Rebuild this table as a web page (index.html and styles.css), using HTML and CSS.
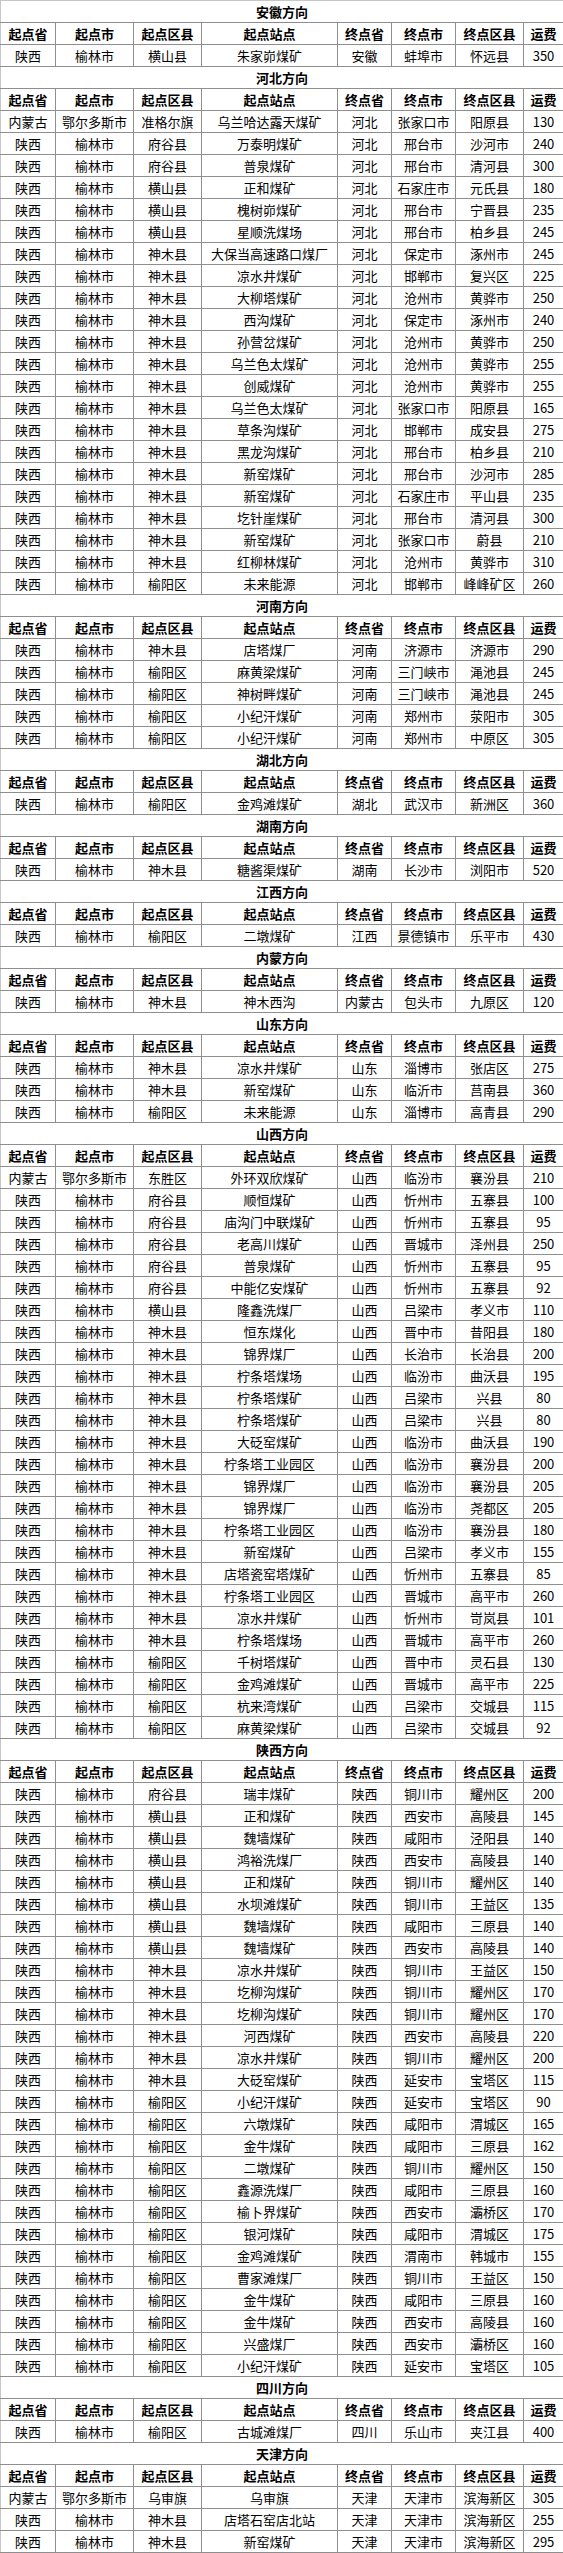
FILE: index.html
```html
<!DOCTYPE html>
<html lang="zh-CN">
<head>
<meta charset="utf-8">
<title>运费表</title>
<link rel="stylesheet" href="styles.css">
</head>
<body>
<table class="freight">
<colgroup>
<col class="c-sp"><col class="c-sc"><col class="c-sd"><col class="c-ss"><col class="c-ep"><col class="c-ec"><col class="c-ed"><col class="c-fee">
</colgroup>
<tbody id="rows">
<tr><td class="title" colspan="8">安徽方向</td></tr>
<tr class="head"><th>起点省</th><th>起点市</th><th>起点区县</th><th>起点站点</th><th>终点省</th><th>终点市</th><th>终点区县</th><th>运费</th></tr>
<tr><td>陕西</td><td>榆林市</td><td>横山县</td><td>朱家峁煤矿</td><td>安徽</td><td>蚌埠市</td><td>怀远县</td><td>350</td></tr>

<tr><td class="title" colspan="8">河北方向</td></tr>
<tr class="head"><th>起点省</th><th>起点市</th><th>起点区县</th><th>起点站点</th><th>终点省</th><th>终点市</th><th>终点区县</th><th>运费</th></tr>
<tr><td>内蒙古</td><td>鄂尔多斯市</td><td>准格尔旗</td><td>乌兰哈达露天煤矿</td><td>河北</td><td>张家口市</td><td>阳原县</td><td>130</td></tr>
<tr><td>陕西</td><td>榆林市</td><td>府谷县</td><td>万泰明煤矿</td><td>河北</td><td>邢台市</td><td>沙河市</td><td>240</td></tr>
<tr><td>陕西</td><td>榆林市</td><td>府谷县</td><td>普泉煤矿</td><td>河北</td><td>邢台市</td><td>清河县</td><td>300</td></tr>
<tr><td>陕西</td><td>榆林市</td><td>横山县</td><td>正和煤矿</td><td>河北</td><td>石家庄市</td><td>元氏县</td><td>180</td></tr>
<tr><td>陕西</td><td>榆林市</td><td>横山县</td><td>槐树峁煤矿</td><td>河北</td><td>邢台市</td><td>宁晋县</td><td>235</td></tr>
<tr><td>陕西</td><td>榆林市</td><td>横山县</td><td>星顺洗煤场</td><td>河北</td><td>邢台市</td><td>柏乡县</td><td>245</td></tr>
<tr><td>陕西</td><td>榆林市</td><td>神木县</td><td>大保当高速路口煤厂</td><td>河北</td><td>保定市</td><td>涿州市</td><td>245</td></tr>
<tr><td>陕西</td><td>榆林市</td><td>神木县</td><td>凉水井煤矿</td><td>河北</td><td>邯郸市</td><td>复兴区</td><td>225</td></tr>
<tr><td>陕西</td><td>榆林市</td><td>神木县</td><td>大柳塔煤矿</td><td>河北</td><td>沧州市</td><td>黄骅市</td><td>250</td></tr>
<tr><td>陕西</td><td>榆林市</td><td>神木县</td><td>西沟煤矿</td><td>河北</td><td>保定市</td><td>涿州市</td><td>240</td></tr>
<tr><td>陕西</td><td>榆林市</td><td>神木县</td><td>孙营岔煤矿</td><td>河北</td><td>沧州市</td><td>黄骅市</td><td>250</td></tr>
<tr><td>陕西</td><td>榆林市</td><td>神木县</td><td>乌兰色太煤矿</td><td>河北</td><td>沧州市</td><td>黄骅市</td><td>255</td></tr>
<tr><td>陕西</td><td>榆林市</td><td>神木县</td><td>创威煤矿</td><td>河北</td><td>沧州市</td><td>黄骅市</td><td>255</td></tr>
<tr><td>陕西</td><td>榆林市</td><td>神木县</td><td>乌兰色太煤矿</td><td>河北</td><td>张家口市</td><td>阳原县</td><td>165</td></tr>
<tr><td>陕西</td><td>榆林市</td><td>神木县</td><td>草条沟煤矿</td><td>河北</td><td>邯郸市</td><td>成安县</td><td>275</td></tr>
<tr><td>陕西</td><td>榆林市</td><td>神木县</td><td>黑龙沟煤矿</td><td>河北</td><td>邢台市</td><td>柏乡县</td><td>210</td></tr>
<tr><td>陕西</td><td>榆林市</td><td>神木县</td><td>新窑煤矿</td><td>河北</td><td>邢台市</td><td>沙河市</td><td>285</td></tr>
<tr><td>陕西</td><td>榆林市</td><td>神木县</td><td>新窑煤矿</td><td>河北</td><td>石家庄市</td><td>平山县</td><td>235</td></tr>
<tr><td>陕西</td><td>榆林市</td><td>神木县</td><td>圪针崖煤矿</td><td>河北</td><td>邢台市</td><td>清河县</td><td>300</td></tr>
<tr><td>陕西</td><td>榆林市</td><td>神木县</td><td>新窑煤矿</td><td>河北</td><td>张家口市</td><td>蔚县</td><td>210</td></tr>
<tr><td>陕西</td><td>榆林市</td><td>神木县</td><td>红柳林煤矿</td><td>河北</td><td>沧州市</td><td>黄骅市</td><td>310</td></tr>
<tr><td>陕西</td><td>榆林市</td><td>榆阳区</td><td>未来能源</td><td>河北</td><td>邯郸市</td><td>峰峰矿区</td><td>260</td></tr>

<tr><td class="title" colspan="8">河南方向</td></tr>
<tr class="head"><th>起点省</th><th>起点市</th><th>起点区县</th><th>起点站点</th><th>终点省</th><th>终点市</th><th>终点区县</th><th>运费</th></tr>
<tr><td>陕西</td><td>榆林市</td><td>神木县</td><td>店塔煤厂</td><td>河南</td><td>济源市</td><td>济源市</td><td>290</td></tr>
<tr><td>陕西</td><td>榆林市</td><td>榆阳区</td><td>麻黄梁煤矿</td><td>河南</td><td>三门峡市</td><td>渑池县</td><td>245</td></tr>
<tr><td>陕西</td><td>榆林市</td><td>榆阳区</td><td>神树畔煤矿</td><td>河南</td><td>三门峡市</td><td>渑池县</td><td>245</td></tr>
<tr><td>陕西</td><td>榆林市</td><td>榆阳区</td><td>小纪汗煤矿</td><td>河南</td><td>郑州市</td><td>荥阳市</td><td>305</td></tr>
<tr><td>陕西</td><td>榆林市</td><td>榆阳区</td><td>小纪汗煤矿</td><td>河南</td><td>郑州市</td><td>中原区</td><td>305</td></tr>

<tr><td class="title" colspan="8">湖北方向</td></tr>
<tr class="head"><th>起点省</th><th>起点市</th><th>起点区县</th><th>起点站点</th><th>终点省</th><th>终点市</th><th>终点区县</th><th>运费</th></tr>
<tr><td>陕西</td><td>榆林市</td><td>榆阳区</td><td>金鸡滩煤矿</td><td>湖北</td><td>武汉市</td><td>新洲区</td><td>360</td></tr>

<tr><td class="title" colspan="8">湖南方向</td></tr>
<tr class="head"><th>起点省</th><th>起点市</th><th>起点区县</th><th>起点站点</th><th>终点省</th><th>终点市</th><th>终点区县</th><th>运费</th></tr>
<tr><td>陕西</td><td>榆林市</td><td>神木县</td><td>糖酱渠煤矿</td><td>湖南</td><td>长沙市</td><td>浏阳市</td><td>520</td></tr>

<tr><td class="title" colspan="8">江西方向</td></tr>
<tr class="head"><th>起点省</th><th>起点市</th><th>起点区县</th><th>起点站点</th><th>终点省</th><th>终点市</th><th>终点区县</th><th>运费</th></tr>
<tr><td>陕西</td><td>榆林市</td><td>榆阳区</td><td>二墩煤矿</td><td>江西</td><td>景德镇市</td><td>乐平市</td><td>430</td></tr>

<tr><td class="title" colspan="8">内蒙方向</td></tr>
<tr class="head"><th>起点省</th><th>起点市</th><th>起点区县</th><th>起点站点</th><th>终点省</th><th>终点市</th><th>终点区县</th><th>运费</th></tr>
<tr><td>陕西</td><td>榆林市</td><td>神木县</td><td>神木西沟</td><td>内蒙古</td><td>包头市</td><td>九原区</td><td>120</td></tr>

<tr><td class="title" colspan="8">山东方向</td></tr>
<tr class="head"><th>起点省</th><th>起点市</th><th>起点区县</th><th>起点站点</th><th>终点省</th><th>终点市</th><th>终点区县</th><th>运费</th></tr>
<tr><td>陕西</td><td>榆林市</td><td>神木县</td><td>凉水井煤矿</td><td>山东</td><td>淄博市</td><td>张店区</td><td>275</td></tr>
<tr><td>陕西</td><td>榆林市</td><td>神木县</td><td>新窑煤矿</td><td>山东</td><td>临沂市</td><td>莒南县</td><td>360</td></tr>
<tr><td>陕西</td><td>榆林市</td><td>榆阳区</td><td>未来能源</td><td>山东</td><td>淄博市</td><td>高青县</td><td>290</td></tr>

<tr><td class="title" colspan="8">山西方向</td></tr>
<tr class="head"><th>起点省</th><th>起点市</th><th>起点区县</th><th>起点站点</th><th>终点省</th><th>终点市</th><th>终点区县</th><th>运费</th></tr>
<tr><td>内蒙古</td><td>鄂尔多斯市</td><td>东胜区</td><td>外环双欣煤矿</td><td>山西</td><td>临汾市</td><td>襄汾县</td><td>210</td></tr>
<tr><td>陕西</td><td>榆林市</td><td>府谷县</td><td>顺恒煤矿</td><td>山西</td><td>忻州市</td><td>五寨县</td><td>100</td></tr>
<tr><td>陕西</td><td>榆林市</td><td>府谷县</td><td>庙沟门中联煤矿</td><td>山西</td><td>忻州市</td><td>五寨县</td><td>95</td></tr>
<tr><td>陕西</td><td>榆林市</td><td>府谷县</td><td>老高川煤矿</td><td>山西</td><td>晋城市</td><td>泽州县</td><td>250</td></tr>
<tr><td>陕西</td><td>榆林市</td><td>府谷县</td><td>普泉煤矿</td><td>山西</td><td>忻州市</td><td>五寨县</td><td>95</td></tr>
<tr><td>陕西</td><td>榆林市</td><td>府谷县</td><td>中能亿安煤矿</td><td>山西</td><td>忻州市</td><td>五寨县</td><td>92</td></tr>
<tr><td>陕西</td><td>榆林市</td><td>横山县</td><td>隆鑫洗煤厂</td><td>山西</td><td>吕梁市</td><td>孝义市</td><td>110</td></tr>
<tr><td>陕西</td><td>榆林市</td><td>神木县</td><td>恒东煤化</td><td>山西</td><td>晋中市</td><td>昔阳县</td><td>180</td></tr>
<tr><td>陕西</td><td>榆林市</td><td>神木县</td><td>锦界煤厂</td><td>山西</td><td>长治市</td><td>长治县</td><td>200</td></tr>
<tr><td>陕西</td><td>榆林市</td><td>神木县</td><td>柠条塔煤场</td><td>山西</td><td>临汾市</td><td>曲沃县</td><td>195</td></tr>
<tr><td>陕西</td><td>榆林市</td><td>神木县</td><td>柠条塔煤矿</td><td>山西</td><td>吕梁市</td><td>兴县</td><td>80</td></tr>
<tr><td>陕西</td><td>榆林市</td><td>神木县</td><td>柠条塔煤矿</td><td>山西</td><td>吕梁市</td><td>兴县</td><td>80</td></tr>
<tr><td>陕西</td><td>榆林市</td><td>神木县</td><td>大砭窑煤矿</td><td>山西</td><td>临汾市</td><td>曲沃县</td><td>190</td></tr>
<tr><td>陕西</td><td>榆林市</td><td>神木县</td><td>柠条塔工业园区</td><td>山西</td><td>临汾市</td><td>襄汾县</td><td>200</td></tr>
<tr><td>陕西</td><td>榆林市</td><td>神木县</td><td>锦界煤厂</td><td>山西</td><td>临汾市</td><td>襄汾县</td><td>205</td></tr>
<tr><td>陕西</td><td>榆林市</td><td>神木县</td><td>锦界煤厂</td><td>山西</td><td>临汾市</td><td>尧都区</td><td>205</td></tr>
<tr><td>陕西</td><td>榆林市</td><td>神木县</td><td>柠条塔工业园区</td><td>山西</td><td>临汾市</td><td>襄汾县</td><td>180</td></tr>
<tr><td>陕西</td><td>榆林市</td><td>神木县</td><td>新窑煤矿</td><td>山西</td><td>吕梁市</td><td>孝义市</td><td>155</td></tr>
<tr><td>陕西</td><td>榆林市</td><td>神木县</td><td>店塔瓷窑塔煤矿</td><td>山西</td><td>忻州市</td><td>五寨县</td><td>85</td></tr>
<tr><td>陕西</td><td>榆林市</td><td>神木县</td><td>柠条塔工业园区</td><td>山西</td><td>晋城市</td><td>高平市</td><td>260</td></tr>
<tr><td>陕西</td><td>榆林市</td><td>神木县</td><td>凉水井煤矿</td><td>山西</td><td>忻州市</td><td>岢岚县</td><td>101</td></tr>
<tr><td>陕西</td><td>榆林市</td><td>神木县</td><td>柠条塔煤场</td><td>山西</td><td>晋城市</td><td>高平市</td><td>260</td></tr>
<tr><td>陕西</td><td>榆林市</td><td>榆阳区</td><td>千树塔煤矿</td><td>山西</td><td>晋中市</td><td>灵石县</td><td>130</td></tr>
<tr><td>陕西</td><td>榆林市</td><td>榆阳区</td><td>金鸡滩煤矿</td><td>山西</td><td>晋城市</td><td>高平市</td><td>225</td></tr>
<tr><td>陕西</td><td>榆林市</td><td>榆阳区</td><td>杭来湾煤矿</td><td>山西</td><td>吕梁市</td><td>交城县</td><td>115</td></tr>
<tr><td>陕西</td><td>榆林市</td><td>榆阳区</td><td>麻黄梁煤矿</td><td>山西</td><td>吕梁市</td><td>交城县</td><td>92</td></tr>

<tr><td class="title" colspan="8">陕西方向</td></tr>
<tr class="head"><th>起点省</th><th>起点市</th><th>起点区县</th><th>起点站点</th><th>终点省</th><th>终点市</th><th>终点区县</th><th>运费</th></tr>
<tr><td>陕西</td><td>榆林市</td><td>府谷县</td><td>瑞丰煤矿</td><td>陕西</td><td>铜川市</td><td>耀州区</td><td>200</td></tr>
<tr><td>陕西</td><td>榆林市</td><td>横山县</td><td>正和煤矿</td><td>陕西</td><td>西安市</td><td>高陵县</td><td>145</td></tr>
<tr><td>陕西</td><td>榆林市</td><td>横山县</td><td>魏墙煤矿</td><td>陕西</td><td>咸阳市</td><td>泾阳县</td><td>140</td></tr>
<tr><td>陕西</td><td>榆林市</td><td>横山县</td><td>鸿裕洗煤厂</td><td>陕西</td><td>西安市</td><td>高陵县</td><td>140</td></tr>
<tr><td>陕西</td><td>榆林市</td><td>横山县</td><td>正和煤矿</td><td>陕西</td><td>铜川市</td><td>耀州区</td><td>140</td></tr>
<tr><td>陕西</td><td>榆林市</td><td>横山县</td><td>水坝滩煤矿</td><td>陕西</td><td>铜川市</td><td>王益区</td><td>135</td></tr>
<tr><td>陕西</td><td>榆林市</td><td>横山县</td><td>魏墙煤矿</td><td>陕西</td><td>咸阳市</td><td>三原县</td><td>140</td></tr>
<tr><td>陕西</td><td>榆林市</td><td>横山县</td><td>魏墙煤矿</td><td>陕西</td><td>西安市</td><td>高陵县</td><td>140</td></tr>
<tr><td>陕西</td><td>榆林市</td><td>神木县</td><td>凉水井煤矿</td><td>陕西</td><td>铜川市</td><td>王益区</td><td>150</td></tr>
<tr><td>陕西</td><td>榆林市</td><td>神木县</td><td>圪柳沟煤矿</td><td>陕西</td><td>铜川市</td><td>耀州区</td><td>170</td></tr>
<tr><td>陕西</td><td>榆林市</td><td>神木县</td><td>圪柳沟煤矿</td><td>陕西</td><td>铜川市</td><td>耀州区</td><td>170</td></tr>
<tr><td>陕西</td><td>榆林市</td><td>神木县</td><td>河西煤矿</td><td>陕西</td><td>西安市</td><td>高陵县</td><td>220</td></tr>
<tr><td>陕西</td><td>榆林市</td><td>神木县</td><td>凉水井煤矿</td><td>陕西</td><td>铜川市</td><td>耀州区</td><td>200</td></tr>
<tr><td>陕西</td><td>榆林市</td><td>神木县</td><td>大砭窑煤矿</td><td>陕西</td><td>延安市</td><td>宝塔区</td><td>115</td></tr>
<tr><td>陕西</td><td>榆林市</td><td>榆阳区</td><td>小纪汗煤矿</td><td>陕西</td><td>延安市</td><td>宝塔区</td><td>90</td></tr>
<tr><td>陕西</td><td>榆林市</td><td>榆阳区</td><td>六墩煤矿</td><td>陕西</td><td>咸阳市</td><td>渭城区</td><td>165</td></tr>
<tr><td>陕西</td><td>榆林市</td><td>榆阳区</td><td>金牛煤矿</td><td>陕西</td><td>咸阳市</td><td>三原县</td><td>162</td></tr>
<tr><td>陕西</td><td>榆林市</td><td>榆阳区</td><td>二墩煤矿</td><td>陕西</td><td>铜川市</td><td>耀州区</td><td>150</td></tr>
<tr><td>陕西</td><td>榆林市</td><td>榆阳区</td><td>鑫源洗煤厂</td><td>陕西</td><td>咸阳市</td><td>三原县</td><td>160</td></tr>
<tr><td>陕西</td><td>榆林市</td><td>榆阳区</td><td>榆卜界煤矿</td><td>陕西</td><td>西安市</td><td>灞桥区</td><td>170</td></tr>
<tr><td>陕西</td><td>榆林市</td><td>榆阳区</td><td>银河煤矿</td><td>陕西</td><td>咸阳市</td><td>渭城区</td><td>175</td></tr>
<tr><td>陕西</td><td>榆林市</td><td>榆阳区</td><td>金鸡滩煤矿</td><td>陕西</td><td>渭南市</td><td>韩城市</td><td>155</td></tr>
<tr><td>陕西</td><td>榆林市</td><td>榆阳区</td><td>曹家滩煤厂</td><td>陕西</td><td>铜川市</td><td>王益区</td><td>150</td></tr>
<tr><td>陕西</td><td>榆林市</td><td>榆阳区</td><td>金牛煤矿</td><td>陕西</td><td>咸阳市</td><td>三原县</td><td>160</td></tr>
<tr><td>陕西</td><td>榆林市</td><td>榆阳区</td><td>金牛煤矿</td><td>陕西</td><td>西安市</td><td>高陵县</td><td>160</td></tr>
<tr><td>陕西</td><td>榆林市</td><td>榆阳区</td><td>兴盛煤厂</td><td>陕西</td><td>西安市</td><td>灞桥区</td><td>160</td></tr>
<tr><td>陕西</td><td>榆林市</td><td>榆阳区</td><td>小纪汗煤矿</td><td>陕西</td><td>延安市</td><td>宝塔区</td><td>105</td></tr>

<tr><td class="title" colspan="8">四川方向</td></tr>
<tr class="head"><th>起点省</th><th>起点市</th><th>起点区县</th><th>起点站点</th><th>终点省</th><th>终点市</th><th>终点区县</th><th>运费</th></tr>
<tr><td>陕西</td><td>榆林市</td><td>榆阳区</td><td>古城滩煤厂</td><td>四川</td><td>乐山市</td><td>夹江县</td><td>400</td></tr>

<tr><td class="title" colspan="8">天津方向</td></tr>
<tr class="head"><th>起点省</th><th>起点市</th><th>起点区县</th><th>起点站点</th><th>终点省</th><th>终点市</th><th>终点区县</th><th>运费</th></tr>
<tr><td>内蒙古</td><td>鄂尔多斯市</td><td>乌审旗</td><td>乌审旗</td><td>天津</td><td>天津市</td><td>滨海新区</td><td>305</td></tr>
<tr><td>陕西</td><td>榆林市</td><td>神木县</td><td>店塔石窑店北站</td><td>天津</td><td>天津市</td><td>滨海新区</td><td>255</td></tr>
<tr><td>陕西</td><td>榆林市</td><td>神木县</td><td>新窑煤矿</td><td>天津</td><td>天津市</td><td>滨海新区</td><td>295</td></tr>
</tbody>
</table>
</body>
</html>
```

FILE: styles.css
```css
html, body {
  margin: 0;
  padding: 0;
  background: #ffffff;
}

.freight {
  width: 563px;
  table-layout: fixed;
  border-collapse: collapse;
  font-family: "Noto Sans CJK SC", "Noto Sans", sans-serif;
  font-size: 13px;
  color: #000000;
}

.c-sp { width: 55px; }
.c-sc { width: 78px; }
.c-sd { width: 68px; }
.c-ss { width: 136px; }
.c-ep { width: 54px; }
.c-ec { width: 64px; }
.c-ed { width: 68px; }
.c-fee { width: 40px; }

.freight td,
.freight th {
  height: 21px;
  padding: 0;
  line-height: 21px;
  text-align: center;
  vertical-align: middle;
  white-space: nowrap;
  overflow: hidden;
  border: 1px solid #8e8e8e;
  font-weight: normal;
}

.freight th,
.freight td.title {
  font-weight: bold;
}

.freight td:first-child,
.freight th:first-child {
  border-left-color: #c6c6c6;
}

.freight tr:first-child td {
  border-top-color: #c6c6c6;
}
```
